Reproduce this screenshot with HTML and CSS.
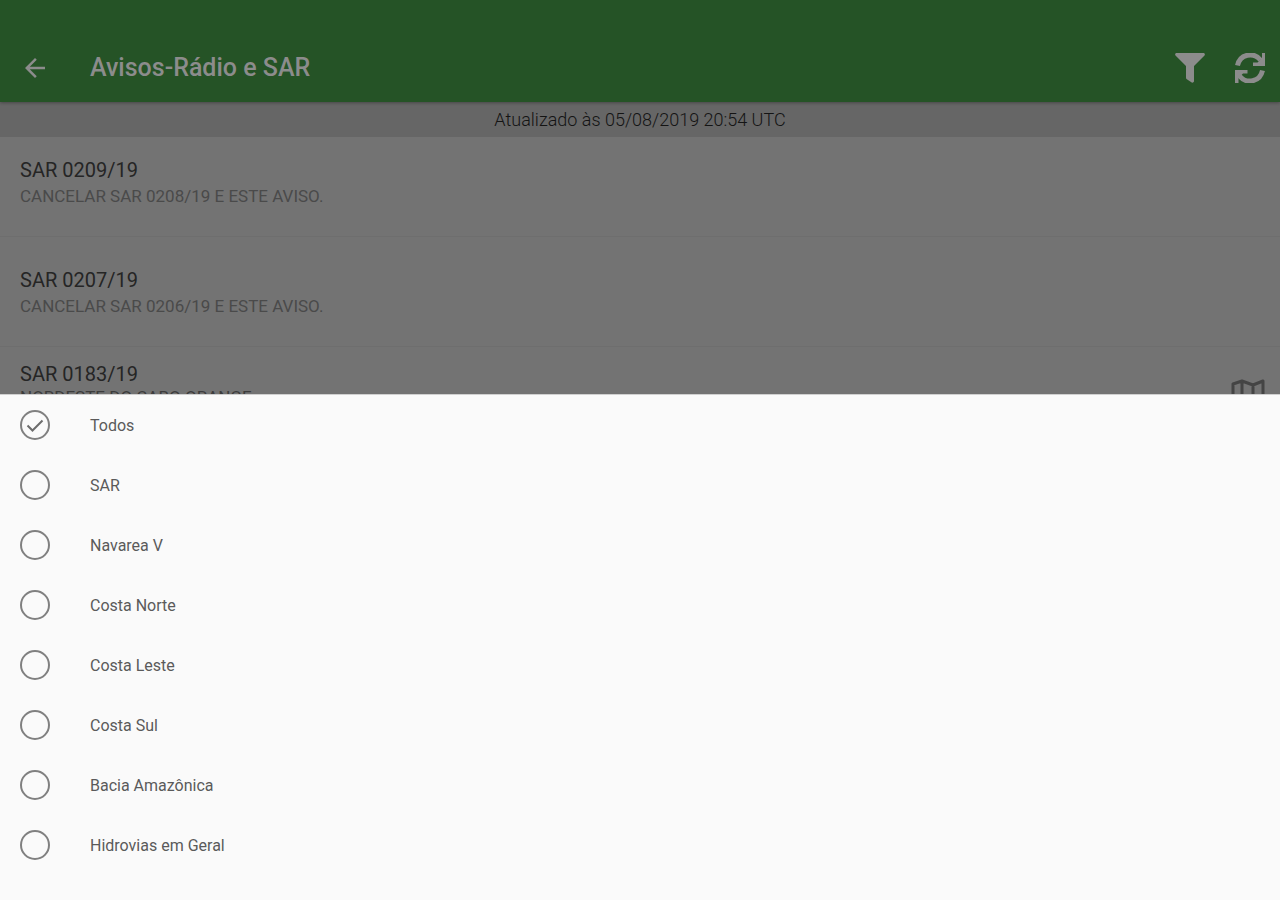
FILE: index.html
```html
<!DOCTYPE html>
<html lang="pt-BR">
<head>
    <meta charset="UTF-8">
    <meta name="viewport" content="width=device-width, initial-scale=1.0">
    <title>Avisos-Rádio e SAR</title>
    <link rel="stylesheet" href="styles.css">
</head>
<body>
    <header class="toolbar">
        <button class="icon-button back" type="button" aria-label="Voltar">
            <svg width="30" height="30" viewBox="0 0 24 24"><path d="M20 11H7.83l5.59-5.59L12 4l-8 8 8 8 1.41-1.41L7.83 13H20z"/></svg>
        </button>
        <h1>Avisos-Rádio e SAR</h1>
        <button class="icon-button" type="button" aria-label="Filtrar">
            <svg width="30" height="30" viewBox="0 0 30 30"><path d="M1 0h28q1.500 1 .5 2.500L19 13v15.500q-.7 1.500-2.300 1L11.500 26q-.5-.5-.5-1.200V13L.5 2.500Q-.5 1 1 0z"/></svg>
        </button>
        <button class="icon-button" type="button" aria-label="Atualizar">
            <svg width="30" height="30" viewBox="0 0 30 30" fill="none"><path class="arc" d="M2.500 12.500C5 1 18.500-1.500 25.500 7M27.500 17.500C25 29 11.500 31.500 4.500 23"/><path d="M30 0v13H18v-3.500h4.500L27 5V0zM0 30V17h12.500v3.500H8L3.500 25v5z"/></svg>
        </button>
    </header>

    <p class="updated">Atualizado às 05/08/2019 20:54 UTC</p>

    <main class="notices">
        <article class="notice">
            <h2>SAR 0209/19</h2>
            <p>CANCELAR SAR 0208/19 E ESTE AVISO.</p>
        </article>
        <article class="notice">
            <h2>SAR 0207/19</h2>
            <p>CANCELAR SAR 0206/19 E ESTE AVISO.</p>
        </article>
        <article class="notice with-map">
            <div>
                <h2>SAR 0183/19</h2>
                <p>NORDESTE DO CABO ORANGE.</p>
            </div>
            <svg class="map-icon" width="34" height="30" viewBox="0 0 34 30" fill="none"><path d="M2 5l9-3 11 4 10-4v24l-10 4-11-4-9 4zM11 2v24M22 6v24"/></svg>
        </article>
    </main>

    <!-- filter options -->
    <form class="sheet">
        <label class="option">
            <span class="radio">
                <input type="radio" name="area" checked>
                <svg class="check" width="30" height="30" viewBox="0 0 30 30" fill="none"><path d="M7.500 15.500l5 5L22.500 10.500"/></svg>
            </span>
            Todos
        </label>
        <label class="option"><span class="radio"><input type="radio" name="area"></span>SAR</label>
        <label class="option"><span class="radio"><input type="radio" name="area"></span>Navarea V</label>
        <label class="option"><span class="radio"><input type="radio" name="area"></span>Costa Norte</label>
        <label class="option"><span class="radio"><input type="radio" name="area"></span>Costa Leste</label>
        <label class="option"><span class="radio"><input type="radio" name="area"></span>Costa Sul</label>
        <label class="option"><span class="radio"><input type="radio" name="area"></span>Bacia Amazônica</label>
        <label class="option"><span class="radio"><input type="radio" name="area"></span>Hidrovias em Geral</label>
    </form>
</body>
</html>
```

FILE: styles.css
```css
* {
    box-sizing: border-box;
}

body {
    margin: 0;
    height: 100vh;
    overflow: hidden;
    background: #737373;
    color: #252525;
    font-family: Roboto, sans-serif;
}

h1, h2, p {
    margin: 0;
    font-weight: 400;
}

.toolbar {
    position: relative;
    display: flex;
    align-items: center;
    gap: 30px;
    padding: 36px 15px 2px 20px;
    background: #255326;
    color: #8c8c8c;
    box-shadow: 0 1px 3px rgba(0, 0, 0, 0.3);
}

.toolbar h1 {
    flex: 1;
    font-size: 25px;
    font-weight: 500;
    line-height: 64px;
}

.icon-button {
    display: flex;
    padding: 0;
    border: 0;
    background: none;
    color: inherit;
    cursor: pointer;
}

.icon-button path {
    fill: currentColor;
}

.icon-button .arc {
    fill: none;
    stroke: currentColor;
    stroke-width: 5;
}

.back {
    margin-right: 10px;
}

/* sits over the top of the list */
.updated {
    margin-bottom: -10px;
    background: #666;
    color: #141414;
    font-size: 18px;
    font-weight: 300;
    line-height: 35px;
    text-align: center;
}

.notice {
    height: 110px;
    padding: 30px 20px 0;
    border-bottom: 1px solid #6e6e6e;
}

.notice h2 {
    font-size: 20px;
    line-height: 26px;
}

.notice p {
    color: #4a4a4a;
    font-size: 17px;
    line-height: 26px;
}

.with-map {
    display: flex;
    justify-content: space-between;
    align-items: flex-start;
    padding: 14px 15px 0 20px;
}

.with-map p {
    color: #3c3c3c;
    line-height: 20px;
}

.map-icon {
    margin-top: 18px;
    stroke: #444;
    stroke-width: 3;
    stroke-linejoin: round;
}

.sheet {
    position: fixed;
    left: 0;
    right: 0;
    bottom: 0;
    padding-bottom: 25px;
    border-top: 1px solid #d0d0d0;
    background: #fafafa;
}

.option {
    display: flex;
    align-items: center;
    gap: 40px;
    height: 60px;
    padding: 0 20px;
    color: #5a5a5a;
    font-size: 16px;
    cursor: pointer;
}

.radio {
    display: grid;
}

.radio input,
.check {
    grid-area: 1 / 1;
}

.radio input {
    appearance: none;
    width: 30px;
    height: 30px;
    margin: 0;
    border: 2px solid #808080;
    border-radius: 50%;
}

.check {
    display: none;
    stroke: #6c6c6c;
    stroke-width: 2;
    pointer-events: none;
}

.radio input:checked + .check {
    display: block;
}
```
